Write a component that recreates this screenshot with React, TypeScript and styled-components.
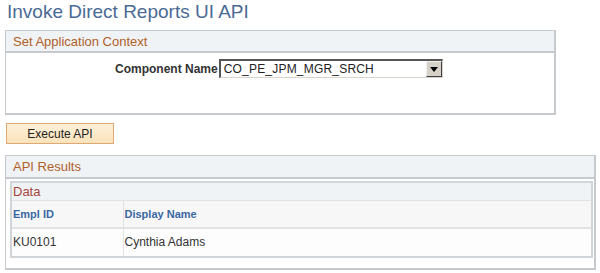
import React from "react";
import styled, { createGlobalStyle } from "styled-components";

const GlobalStyle = createGlobalStyle`
  body {
    margin: 0;
    background: #ffffff;
    font-family: "Liberation Sans", Arial, sans-serif;
  }
`;

const Page = styled.div`
  width: 600px;
  height: 273px;
  overflow: hidden;
  padding: 0 0 0 5px;
  box-sizing: border-box;
`;

const Title = styled.h1`
  margin: 0;
  padding: 1px 0 0 2px;
  height: 30px;
  box-sizing: border-box;
  font-size: 19px;
  font-weight: normal;
  line-height: 22px;
  color: #4a6a94;
`;

const Section = styled.div<{ $width: number; $height: number }>`
  width: ${(p) => p.$width}px;
  height: ${(p) => p.$height}px;
  box-sizing: border-box;
  border: 1px solid #c6cace;
  border-right-width: 2px;
  border-bottom-width: 2px;
  display: flex;
  flex-direction: column;
`;

const SectionHeader = styled.div<{ $height: number }>`
  height: ${(p) => p.$height}px;
  box-sizing: border-box;
  background: #eff3f5;
  border-bottom: 2px solid #c6cace;
  padding: 2px 0 0 7px;
  font-size: 13px;
  line-height: 17px;
  color: #b0602a;
`;

const FieldRow = styled.div`
  display: flex;
  align-items: center;
  padding: 6px 0 0 109px;
  gap: 1px;
`;

const Label = styled.label`
  font-size: 12px;
  font-weight: bold;
  color: #333333;
`;

const SelectBox = styled.div`
  width: 224px;
  height: 19px;
  box-sizing: border-box;
  display: flex;
  align-items: center;
  border-top: 2px solid #555555;
  border-left: 2px solid #555555;
  border-right: 1px solid #d8d4cc;
  border-bottom: 1px solid #d8d4cc;
  background: #ffffff;
`;

const SelectText = styled.span`
  flex: 1;
  padding-left: 3px;
  font-size: 12px;
  color: #222222;
  letter-spacing: 0.2px;
`;

const DropButton = styled.span`
  width: 16px;
  height: 16px;
  box-sizing: border-box;
  background: #d6d2ca;
  border-top: 1px solid #f4f2ee;
  border-left: 1px solid #f4f2ee;
  border-right: 1px solid #404040;
  border-bottom: 1px solid #404040;
  display: flex;
  align-items: center;
  justify-content: center;
`;

const ButtonRow = styled.div`
  padding: 8px 0 11px 1px;
`;

const ActionButton = styled.button`
  width: 108px;
  height: 21px;
  box-sizing: border-box;
  margin: 0;
  padding: 0;
  border: 1px solid #e0a872;
  background: linear-gradient(#fdf0d8, #fbe3bb);
  font-family: "Liberation Sans", Arial, sans-serif;
  font-size: 12px;
  color: #222222;
`;

const GridWrap = styled.div`
  padding: 2px 2px 0 4px;
`;

const GridBox = styled.div`
  width: 583px;
  box-sizing: border-box;
  border: 2px solid #d2d5d8;
`;

const Caption = styled.div`
  height: 17px;
  box-sizing: border-box;
  background: #eff3f5;
  padding: 0 0 0 1px;
  font-size: 13px;
  line-height: 17px;
  color: #a8463c;
`;

const Grid = styled.table`
  width: 100%;
  border-collapse: collapse;
`;

const HeadCell = styled.th<{ $width?: number }>`
  width: ${(p) => (p.$width ? `${p.$width}px` : "auto")};
  height: 27px;
  box-sizing: border-box;
  text-align: left;
  padding: 0 0 0 1px;
  background: #f7f7f7;
  border: 1px solid #e2e2e2;
  border-bottom: 2px solid #e2e2e2;
  font-size: 11px;
  font-weight: bold;
  color: #3a68a4;
  &:first-child { border-left: none; }
  &:last-child { border-right: none; }
`;

const Cell = styled.td`
  height: 28px;
  box-sizing: border-box;
  padding: 0 0 0 1px;
  background: #fdfdfd;
  border: 1px solid #e2e2e2;
  border-bottom: none;
  font-size: 12px;
  color: #333333;
  &:first-child { border-left: none; }
  &:last-child { border-right: none; }
`;

const rows = [{ id: "KU0101", name: "Cynthia Adams" }];

export default function App() {
  return (
    <>
      <GlobalStyle />
      <Page>
        <Title>Invoke Direct Reports UI API</Title>
        <Section $width={551} $height={85}>
          <SectionHeader $height={22}>Set Application Context</SectionHeader>
          <FieldRow>
            <Label>Component Name</Label>
            <SelectBox>
              <SelectText>CO_PE_JPM_MGR_SRCH</SelectText>
              <DropButton>
                <svg width="8" height="5" viewBox="0 0 8 5">
                  <path d="M0 0h8L4 5z" fill="#000" />
                </svg>
              </DropButton>
            </SelectBox>
          </FieldRow>
        </Section>
        <ButtonRow>
          <ActionButton>Execute API</ActionButton>
        </ButtonRow>
        <Section $width={591} $height={115}>
          <SectionHeader $height={23}>API Results</SectionHeader>
          <GridWrap>
            <GridBox>
              <Caption>Data</Caption>
              <Grid>
                <thead>
                  <tr>
                    <HeadCell $width={111}>Empl ID</HeadCell>
                    <HeadCell>Display Name</HeadCell>
                  </tr>
                </thead>
                <tbody>
                  {rows.map((r) => (
                    <tr key={r.id}>
                      <Cell>{r.id}</Cell>
                      <Cell>{r.name}</Cell>
                    </tr>
                  ))}
                </tbody>
              </Grid>
            </GridBox>
          </GridWrap>
        </Section>
      </Page>
    </>
  );
}
